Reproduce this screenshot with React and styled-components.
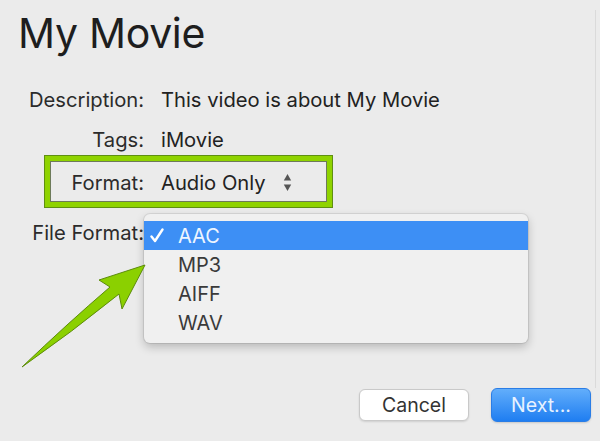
import React from "react";
import styled, { createGlobalStyle } from "styled-components";

const GlobalStyle = createGlobalStyle`
  html, body { margin: 0; padding: 0; }
  body {
    background: #ebebeb;
    font-family: Inter, "Liberation Sans", Arial, sans-serif;
    -webkit-font-smoothing: antialiased;
  }
`;

const Window = styled.div`
  position: relative;
  width: 600px;
  height: 441px;
  display: flex;
  flex-direction: column;
  overflow: hidden;
  background: #ebebeb;
`;

const Content = styled.div`
  position: relative;
  flex: 1;
  padding: 8px 0 0 16px;
  &::after {
    content: "";
    position: absolute;
    right: 4px;
    top: 10px;
    bottom: 0;
    width: 1px;
    background: #dadada;
  }
`;

const Title = styled.h1`
  margin: 0 0 0 2px;
  font-size: 41px;
  line-height: 50px;
  font-weight: 400;
  color: #1e1e1e;
  letter-spacing: -0.3px;
`;

const Form = styled.div`
  display: flex;
  flex-direction: column;
  margin-top: 29px;
`;

const Row = styled.div`
  position: relative;
  display: flex;
  align-items: center;
  height: 24px;
  margin-top: ${(p) => p.$gap || 0}px;
  ${(p) =>
    p.$highlight &&
    `
    &::before {
      content: "";
      position: absolute;
      left: 29px;
      top: -14px;
      width: 277px;
      height: 41px;
      border: 5px solid #8fd300;
      box-shadow: 0 0 0 1px #5f8f12, inset 0 0 0 1px #6d7a5a;
      pointer-events: none;
    }
  `}
`;

const Label = styled.div`
  width: 128px;
  text-align: right;
  font-size: 20.2px;
  color: #2b2b2b;
  white-space: nowrap;
`;

const Value = styled.div`
  margin-left: 17px;
  font-size: 20.2px;
  color: #222;
  display: flex;
  align-items: center;
  white-space: nowrap;
`;

const Stepper = styled.svg`
  margin-left: 17px;
  display: block;
`;

const Menu = styled.div`
  position: absolute;
  left: 128px;
  top: -6px;
  width: 384px;
  padding: 7px 0 6px;
  background: #f0f0f0;
  border-radius: 6px;
  box-shadow: 0 4px 10px rgba(0, 0, 0, 0.22), 0 0 0 1px rgba(0, 0, 0, 0.08);
  z-index: 2;
`;

const MenuItem = styled.div`
  position: relative;
  height: 29px;
  display: flex;
  align-items: center;
  padding-left: 34px;
  font-size: 20px;
  color: ${(p) => (p.$selected ? "#eef5ff" : "#3a3a3a")};
  background: ${(p) => (p.$selected ? "#3d8ff5" : "transparent")};
`;

const Check = styled.svg`
  position: absolute;
  left: 6px;
  top: 7px;
`;

const Footer = styled.div`
  display: flex;
  justify-content: flex-end;
  align-items: center;
  gap: 22px;
  padding: 0 9px 19px 0;
`;

const Button = styled.button`
  height: ${(p) => (p.$primary ? 34 : 32)}px;
  width: ${(p) => (p.$primary ? 100 : 110)}px;
  border-radius: 6px;
  font-family: inherit;
  font-size: 19.5px;
  cursor: pointer;
  padding: 0;
  ${(p) =>
    p.$primary
      ? `
    color: #e8f2ff;
    border: 1px solid #2a7de6;
    background: linear-gradient(#62aefb, #1f7ef1);
    box-shadow: 0 1px 2px rgba(0,0,0,0.15);
  `
      : `
    color: #333;
    border: 1px solid #c9c9c9;
    background: #ffffff;
    box-shadow: 0 1px 2px rgba(0,0,0,0.12);
  `}
`;

const ArrowSvg = styled.svg`
  position: absolute;
  left: 0;
  top: 0;
  pointer-events: none;
  z-index: 3;
`;

export default function App() {
  return (
    <>
      <GlobalStyle />
      <Window>
        <Content>
          <Title>My Movie</Title>
          <Form>
            <Row>
              <Label>Description:</Label>
              <Value>This video is about My Movie</Value>
            </Row>
            <Row $gap={16}>
              <Label>Tags:</Label>
              <Value>iMovie</Value>
            </Row>
            <Row $gap={19} $highlight>
              <Label>Format:</Label>
              <Value>
                Audio Only
                <Stepper width="9" height="19" viewBox="0 0 9 19">
                  <path d="M4.5 1 L8.2 7.5 L0.8 7.5 Z" fill="#555" />
                  <path d="M4.5 18 L8.2 11.5 L0.8 11.5 Z" fill="#555" />
                </Stepper>
              </Value>
            </Row>
            <Row $gap={26}>
              <Label>File Format:</Label>
              <Menu>
                <MenuItem $selected>
                  <Check width="14" height="15" viewBox="0 0 14 15">
                    <path
                      d="M1.5 8.5 L5 13 L12.5 1.5"
                      fill="none"
                      stroke="#ffffff"
                      strokeWidth="2.4"
                      strokeLinecap="round"
                      strokeLinejoin="round"
                    />
                  </Check>
                  AAC
                </MenuItem>
                <MenuItem>MP3</MenuItem>
                <MenuItem>AIFF</MenuItem>
                <MenuItem>WAV</MenuItem>
              </Menu>
            </Row>
          </Form>
        </Content>
        <Footer>
          <Button>Cancel</Button>
          <Button $primary>Next...</Button>
        </Footer>
        <ArrowSvg width="600" height="441" viewBox="0 0 600 441">
          <path
            d="M22 367 Q68 323 110 287 L99 280 L145 265 L122 309 L119 294 Q72 332 22 367 Z"
            fill="#8bd000"
            stroke="#5d8c0c"
            strokeWidth="1"
            strokeLinejoin="round"
          />
        </ArrowSvg>
      </Window>
    </>
  );
}
